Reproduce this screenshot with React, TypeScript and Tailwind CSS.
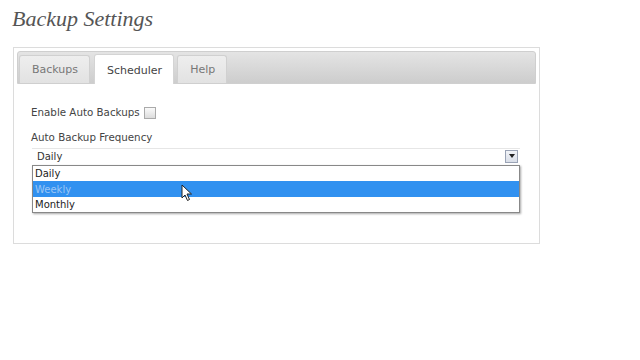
import { useState } from "react";

const OPTIONS = ["Daily", "Weekly", "Monthly"];

function Cursor() {
  return (
    <svg
      className="absolute left-[181px] top-[184px]"
      width="12"
      height="18"
      viewBox="0 0 12 18"
    >
      <path
        d="M1 1 L1 14 L4 11 L6.5 16.5 L8.5 15.5 L6 10 L10.5 10 Z"
        fill="#fff"
        stroke="#222"
        strokeWidth="1"
        strokeLinejoin="round"
      />
    </svg>
  );
}

function Tab({ label, active }: { label: string; active?: boolean }) {
  return active ? (
    <div className="h-[30px] pl-[12px] pr-[11px] pt-[3px] flex items-center bg-white border border-b-0 border-[#d4d4d4] rounded-t-[3px] text-[11px] text-[#444] -mb-px">
      {label}
    </div>
  ) : (
    <div className="h-[28px] pl-[12px] pr-[11px] pt-[2px] flex items-center bg-gradient-to-b from-[#eeeeee] to-[#e2e2e2] border border-b-0 border-[#d0d0d0] rounded-t-[3px] text-[11px] text-[#777]">
      {label}
    </div>
  );
}

export default function App() {
  const [selected] = useState("Daily");
  return (
    <div
      className="relative w-[640px] h-[360px] bg-white overflow-hidden"
      style={{ fontFamily: '"DejaVu Sans", Verdana, sans-serif' }}
    >
      <h1
        className="pl-[12px] pt-[6px] text-[22px] italic text-[#555] leading-[26px]"
        style={{ fontFamily: '"Liberation Serif", Georgia, serif' }}
      >
        Backup Settings
      </h1>
      <div className="ml-[13px] mt-[15px] w-[527px] h-[197px] border border-[#dcdcdc] p-[3px]">
        <div className="h-[33px] flex items-end pl-[1px] bg-gradient-to-b from-[#e4e4e4] to-[#cdcdcd] border border-[#cfcfcf] rounded-t-[3px]">
          <Tab label="Backups" />
          <div className="w-[4px]" />
          <Tab label="Scheduler" active />
          <div className="w-[3px]" />
          <Tab label="Help" />
        </div>
        <div className="pl-[14px] pr-[16px] pt-[21px]">
          <div className="flex items-center gap-[4px] text-[10.3px] text-[#444]">
            <span>Enable Auto Backups</span>
            <span className="w-[12px] h-[12px] border border-[#aaa] bg-gradient-to-b from-[#fafafa] to-[#dcdcdc]" />
          </div>
          <div className="mt-[10px] text-[10.3px] text-[#444]">
            Auto Backup Frequency
          </div>
          <div className="relative mt-[2px] ml-[1px] h-[16px] border-t border-[#e6e6e6] flex items-center justify-between pl-[5px] pr-[2px] text-[10px] text-[#333]">
            <span>{selected}</span>
            <span className="w-[13px] h-[13px] border border-[#9aa3b5] bg-gradient-to-b from-[#f2f4f8] to-[#d9dee8] flex items-center justify-center">
              <span className="w-0 h-0 border-l-[3px] border-r-[3px] border-t-[4px] border-l-transparent border-r-transparent border-t-[#222]" />
            </span>
            <div className="absolute left-0 top-[16px] w-[488px] bg-white border border-[#888] shadow-[1px_1px_2px_rgba(0,0,0,0.35)]">
              {OPTIONS.map((o) => (
                <div
                  key={o}
                  className={
                    o === "Weekly"
                      ? "h-[15.5px] pl-[2px] flex items-center text-[10px] bg-[#3191f0] text-[#9cc6f5]"
                      : "h-[15.5px] pl-[2px] flex items-center text-[10px] text-[#222]"
                  }
                >
                  {o}
                </div>
              ))}
            </div>
          </div>
        </div>
      </div>
      <Cursor />
    </div>
  );
}
